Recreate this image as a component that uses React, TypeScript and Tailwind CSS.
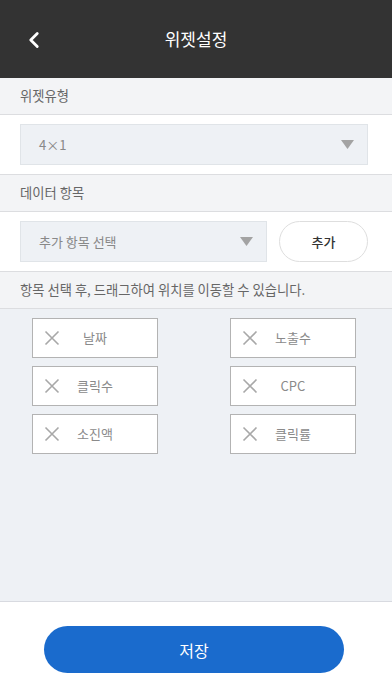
import { ChevronLeft } from 'lucide-react'

const items = [
  ['날짜', '노출수'],
  ['클릭수', 'CPC'],
  ['소진액', '클릭률'],
]

function Caret() {
  return (
    <svg width="13" height="9" viewBox="0 0 13 9" className="shrink-0">
      <path d="M0 0 H13 L6.5 9 Z" fill="#a3a3a3" />
    </svg>
  )
}

function ItemBox({ label }: { label: string }) {
  return (
    <div className="relative flex h-[40px] w-[126px] items-center justify-center border-[1.5px] border-[#b3b3b3] bg-white">
      <svg width="16" height="16" viewBox="0 0 16 16" className="absolute left-[11px] top-[11px]">
        <path d="M1.5 1.5 L14.5 14.5 M14.5 1.5 L1.5 14.5" stroke="#a8a8a8" strokeWidth="1.6" />
      </svg>
      <span className="text-[13px] text-[#8a8a8a]">{label}</span>
    </div>
  )
}

function SectionLabel({ children }: { children: string }) {
  return (
    <div className="flex h-[37px] items-center border-b border-[#dcdde0] bg-[#f3f4f6] px-[20px] text-[13.3px] text-[#666]">
      {children}
    </div>
  )
}

export default function App() {
  return (
    <div
      className="flex h-[696px] w-[392px] flex-col bg-white"
      style={{ fontFamily: '"Noto Sans CJK KR", "Noto Sans", sans-serif' }}
    >
      {/* header */}
      <div className="relative flex h-[78px] shrink-0 items-center justify-center bg-[#333333]">
        <ChevronLeft className="absolute left-[21px] top-[27px] h-[26px] w-[26px] text-white" strokeWidth={2.6} />
        <span className="text-[17px] text-white">위젯설정</span>
      </div>

      <SectionLabel>위젯유형</SectionLabel>
      <div className="flex h-[60px] items-center border-b border-[#dcdde0] pl-[20px] pr-[24px]">
        <div className="flex h-[41px] w-full items-center justify-between border border-[#e0e4e8] bg-[#eef1f5] pl-[18px] pr-[13px]">
          <span className="text-[13px] text-[#888]">4×1</span>
          <Caret />
        </div>
      </div>

      <SectionLabel>데이터 항목</SectionLabel>
      <div className="flex h-[60px] items-center gap-[12px] border-b border-[#dcdde0] px-[20px]">
        <div className="flex h-[41px] w-[247px] items-center justify-between border border-[#e0e4e8] bg-[#eef1f5] pl-[18px] pr-[13px]">
          <span className="text-[13px] text-[#888]">추가 항목 선택</span>
          <Caret />
        </div>
        <button className="flex h-[41px] w-[89px] items-center justify-center rounded-full border border-[#dedede] bg-white text-[13px] font-medium text-[#333]">
          추가
        </button>
      </div>

      <SectionLabel>항목 선택 후, 드래그하여 위치를 이동할 수 있습니다.</SectionLabel>
      <div className="flex flex-1 flex-col gap-[8px] border-b border-[#d8dae0] bg-[#eef1f5] pl-[32px] pr-[36px] pt-[9px]">
        {items.map(([a, b]) => (
          <div key={a} className="flex justify-between">
            <ItemBox label={a} />
            <ItemBox label={b} />
          </div>
        ))}
      </div>

      {/* footer */}
      <div className="flex h-[94px] shrink-0 pl-[44px] pt-[24px]">
        <button className="flex h-[47px] w-[300px] items-center justify-center rounded-full bg-[#1a6bcd] text-[16px] text-white">
          저장
        </button>
      </div>
    </div>
  )
}
